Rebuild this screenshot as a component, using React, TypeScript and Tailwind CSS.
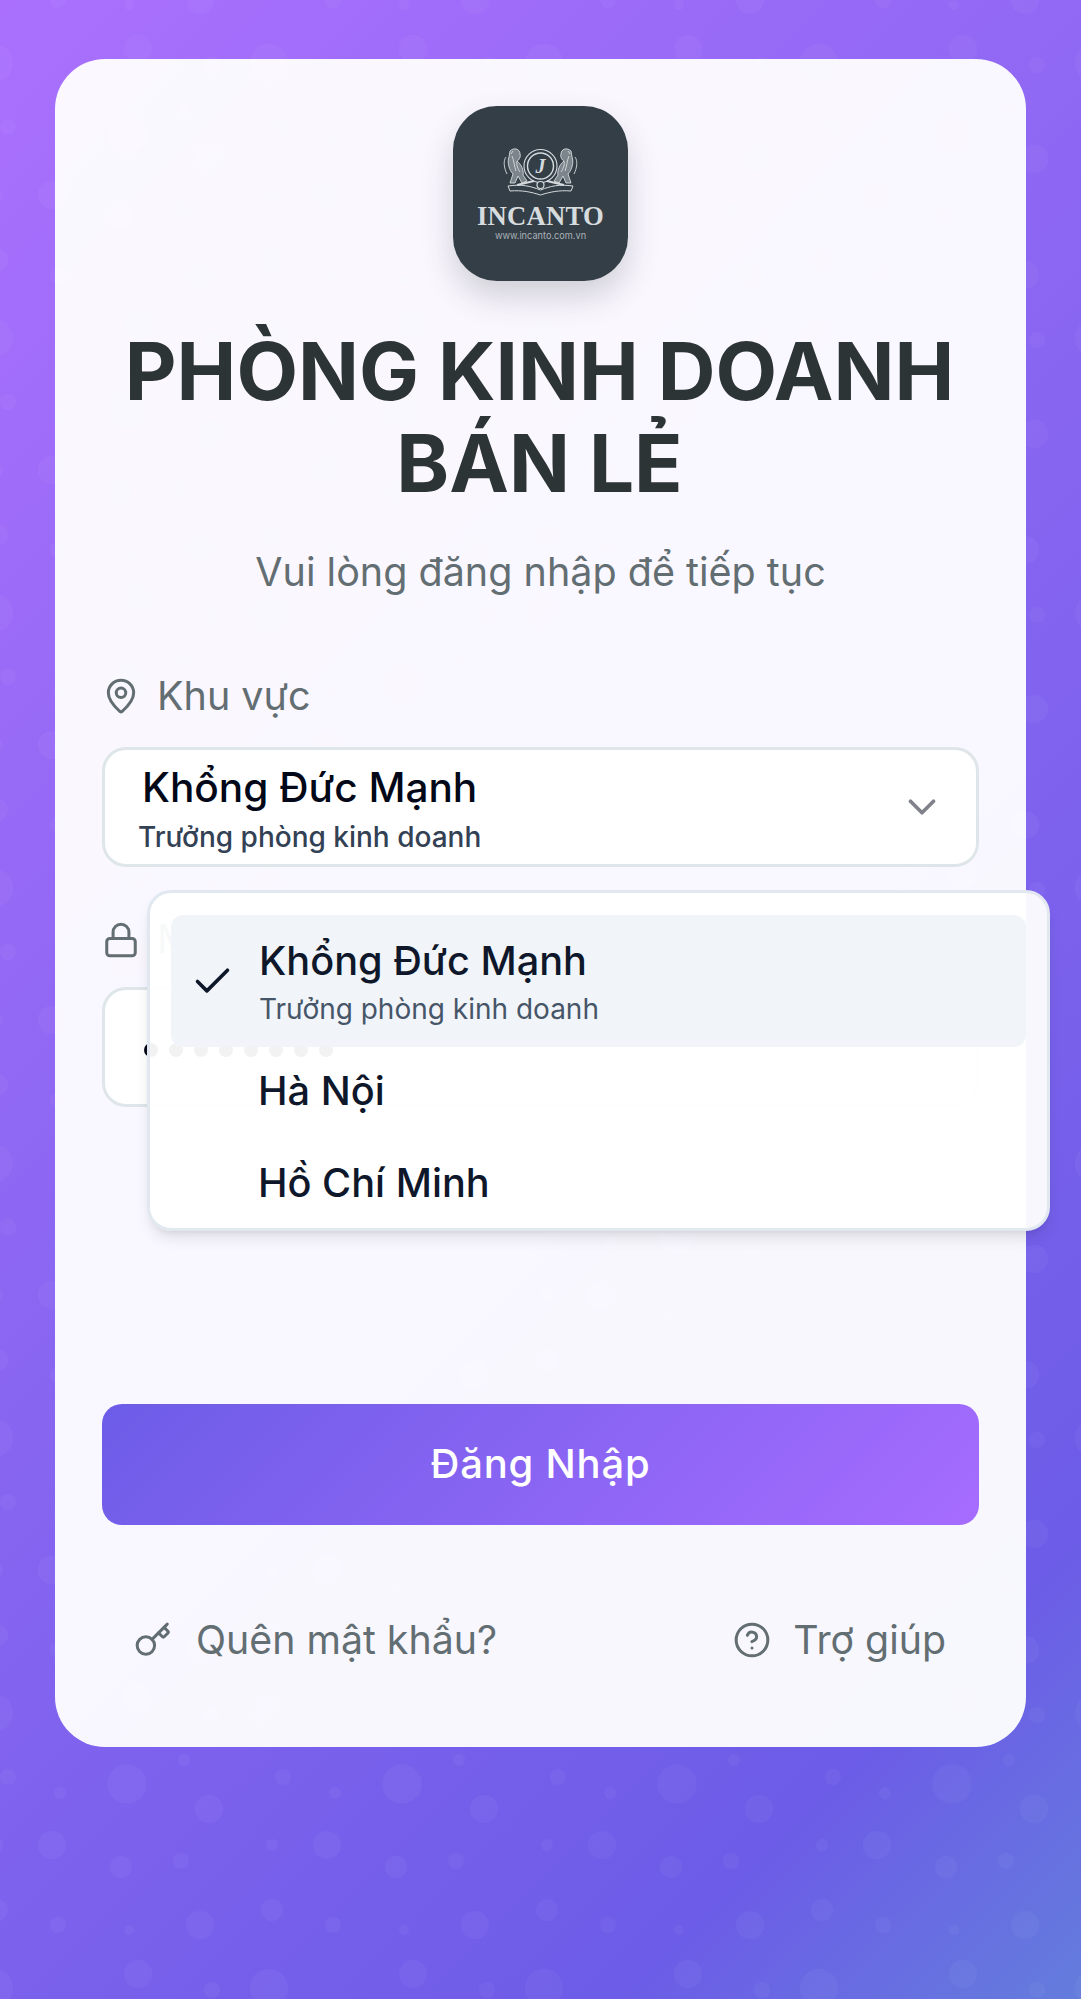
import React from "react";
import { Check, ChevronDown, CircleHelp, Key, Lock, MapPin } from "lucide-react";

const bubbles = [
  [127, 134, 19.5], [209, 159, 14], [52, 195, 14], [121, 217, 11], [181, 211, 8],
  [60, 143, 6], [8, 127, 8], [184, 110, 6], [272, 195, 6], [272, 260, 11],
  [200, 0, 14], [129, 5, 5], [58, 0, 8], [138, 49, 14], [269, 63, 19], [212, 65, 8],
];

const Bubbles = () => (
  <svg className="absolute inset-0 w-full h-full" aria-hidden="true">
    <defs>
      <pattern id="tile" width="275" height="275" patternUnits="userSpaceOnUse">
        {bubbles.map(([x, y, r], i) => (
          <g key={i} fill="#fff" fillOpacity="0.035">
            <circle cx={x} cy={y} r={r} />
            <circle cx={x - 275} cy={y} r={r} />
            <circle cx={x} cy={y + 275} r={r} />
            <circle cx={x - 275} cy={y + 275} r={r} />
          </g>
        ))}
      </pattern>
    </defs>
    <rect width="100%" height="100%" fill="url(#tile)" />
  </svg>
);

const Lion = () => (
  <g stroke="#d5dbdd" strokeWidth="0.9" fill="#d5dbdd" fillOpacity="0.45">
    <path d="M6 3C10 -1 16 1 16 6C17 9 15 12 13 13C17 16 20 22 19 27L23 33L18 35L14 28L11 35L6 35L9 26C5 22 3 14 5 9Z" />
    <path d="M2 9C-1 13 0 20 3 26" fill="none" />
    <path d="M8 8C10 12 10 18 12 23M13 13C12 17 14 21 16 24M9 3L7 6" fill="none" />
  </g>
);

const Logo = () => (
  <div className="w-[175px] h-[175px] rounded-[44px] bg-[#343e47] shadow-[0_16px_32px_rgba(45,52,54,0.2)] flex flex-col items-center">
    <svg width="73" height="49" viewBox="0 0 73 49" className="mt-[42px] overflow-visible">
      <Lion />
      <g transform="matrix(-1 0 0 1 73 0)">
        <Lion />
      </g>
      <circle cx="36.5" cy="18" r="16.5" fill="#343e47" stroke="#d5dbdd" strokeWidth="1.1" />
      <circle cx="36.5" cy="18" r="13" fill="none" stroke="#d5dbdd" strokeWidth="1.4" />
      <text x="36.5" y="25" textAnchor="middle" fontSize="20" fontStyle="italic" fontWeight="700" fontFamily="Liberation Serif, serif" fill="#d5dbdd">J</text>
      <path d="M4 38C18 36 26 38 36.5 42C47 38 55 36 69 38L67 43C55 42 46 44 36.5 47C27 44 18 42 6 43Z" fill="#343e47" stroke="#d5dbdd" strokeWidth="1" />
      <path d="M13 37L30 33M60 37L43 33" stroke="#d5dbdd" strokeWidth="2" />
      <circle cx="36.5" cy="37" r="3.5" fill="#343e47" stroke="#d5dbdd" strokeWidth="1.2" />
    </svg>
    <div className="font-[family-name:'Liberation_Serif',serif] font-bold text-[26.7px] leading-[30px] mt-[4px] text-[#d6dcde] tracking-[0.2px] whitespace-nowrap">
      INCANTO
    </div>
    <div className="text-[9.2px] leading-[12px] mt-[-1px] text-[#a9b1b6] whitespace-nowrap">www.incanto.com.vn</div>
  </div>
);

const App = () => {
  return (
    <div className="relative min-h-[1999px] overflow-hidden bg-linear-135 from-[#aa70fd] via-[#6c5ce7] via-85% to-[#637cdc] font-[family-name:Inter,sans-serif]">
      <Bubbles />
      <div className="relative mx-[55px] mt-[59px] h-[1688px] pt-[47px] px-[47px] rounded-[50px] bg-white/95 flex flex-col">
        <div className="flex justify-center">
          <Logo />
        </div>

        <h1 className="mt-[44px] pr-[2px] text-center text-[80px] leading-[92px] font-bold text-[#2d3436] whitespace-nowrap">
          PHÒNG KINH DOANH
          <br />
          BÁN LẺ
        </h1>
        <p className="mt-[35px] text-center text-[39.5px] leading-[56px] text-[#636e72]">Vui lòng đăng nhập để tiếp tục</p>

        <label className="mt-[71px] h-[52px] flex items-center gap-[17px] text-[39.5px] text-[#636e72]">
          <MapPin size={38} strokeWidth={1.9} className="-mt-[2px]" />
          Khu vực
        </label>

        <div className="relative mt-[24px]">
          <div className="h-[120px] rounded-[24px] border-[3px] border-[#dfe6e9] bg-white pl-[33px] pr-[31px] flex items-center justify-between">
            <div className="flex flex-col items-start">
              <span className="ml-[4px] text-[40.6px] leading-[56px] font-[450] text-[#020817]">Khổng Đức Mạnh</span>
              <span className="mt-[3px] text-[28px] leading-[36px] font-[450] text-[#334155]">Trưởng phòng kinh doanh</span>
            </div>
            <ChevronDown size={46} strokeWidth={1.9} className="text-[#020817] opacity-50" />
          </div>

          <div className="absolute z-10 left-[45px] top-[143px] w-[903px] h-[341px] p-[21px] rounded-[24px] border-[3px] border-[#e2e8f0] bg-white/95 shadow-lg">
            <div className="mt-[1px] h-[132px] rounded-[12px] bg-[#f1f5f9] flex items-center">
              <Check size={45} strokeWidth={1.9} className="ml-[19px] text-[#0f172a]" />
              <div className="ml-[24px] flex flex-col -mt-[3px]">
                <span className="text-[39.7px] leading-[56px] font-[450] text-[#0f172a]">Khổng Đức Mạnh</span>
                <span className="mt-[2px] text-[28px] leading-[36px] text-[#475569]">Trưởng phòng kinh doanh</span>
              </div>
            </div>
            <div className="h-[92px] pl-[87px] pb-[2px] flex items-center text-[39.7px] font-[450] text-[#0f172a]">Hà Nội</div>
            <div className="h-[92px] pl-[87px] pb-[2px] flex items-center text-[39.7px] font-[450] text-[#0f172a]">Hồ Chí Minh</div>
          </div>
        </div>

        <label className="mt-[47px] h-[52px] flex items-center gap-[17px] text-[39.5px] text-[#636e72]">
          <Lock size={38} strokeWidth={1.9} />
          Mật khẩu
        </label>
        <div className="mt-[21px] h-[120px] rounded-[24px] border-[3px] border-[#dfe6e9] bg-white pl-[39px] pt-[5px] flex items-center gap-[11px]">
          {[0, 1, 2, 3, 4, 5, 6, 7].map((i) => (
            <span key={i} className="w-[14px] h-[14px] rounded-full bg-[#020817]" />
          ))}
        </div>

        <button className="mt-[297px] h-[121px] pb-[2px] rounded-[20px] bg-linear-135 from-[#6c5ce7] to-[#a66cff] text-white text-[40px] font-[450] tracking-[0.8px]">
          Đăng Nhập
        </button>

        <div className="mt-[86px] pl-[32px] pr-[33px] flex items-center justify-between text-[39.3px] text-[#636e72]">
          <a className="flex items-center gap-[24px]">
            <Key size={38} strokeWidth={1.9} />
            Quên mật khẩu?
          </a>
          <a className="flex items-center gap-[22px]">
            <CircleHelp size={38} strokeWidth={1.9} />
            Trợ giúp
          </a>
        </div>
      </div>
    </div>
  );
};

export default App;
